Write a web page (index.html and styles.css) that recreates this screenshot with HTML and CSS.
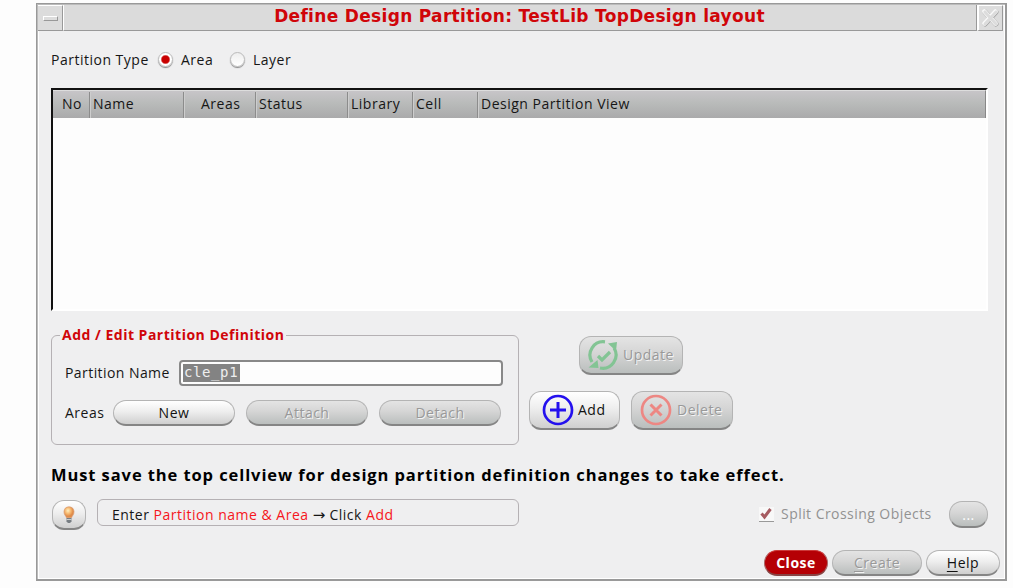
FILE: index.html
```html
<!DOCTYPE html>
<html lang="en">
<head>
<meta charset="utf-8">
<title>Define Design Partition</title>
<link rel="stylesheet" href="styles.css">
</head>
<body>
<main class="window">
  <header class="titlebar">
    <div class="sys"><i class="dash"></i></div>
    <h1 class="title">Define Design Partition: TestLib TopDesign layout</h1>
    <div class="sys close"><svg width="19" height="18" viewBox="0 0 19 18" fill="none" stroke-linejoin="round" stroke-linecap="round"><path d="M4 3l11 12M15 3L4 15" stroke="#a4a4a4" stroke-width="5"/><path d="M3.500 2.500l11 12M14.500 2.500l-11 12" stroke="#fafafa" stroke-width="4.600"/><path d="M4 3l11 12M15 3L4 15" stroke="#dcdcdc" stroke-width="3.200"/></svg></div>
  </header>
  <div class="content">
    <div class="types">
      <span class="t-type">Partition Type</span>
      <i class="radio on"></i><span class="t-area">Area</span>
      <i class="radio second"></i><span>Layer</span>
    </div>
    <section class="table">
      <div class="thead">
        <div class="th no">No</div><div class="th name">Name</div><div class="th areas">Areas</div><div class="th status">Status</div><div class="th library">Library</div><div class="th cell">Cell</div><div class="th view">Design Partition View</div>
      </div>
    </section>
    <div class="middle">
      <fieldset class="group">
        <legend>Add / Edit Partition Definition</legend>
        <div class="field"><span>Partition Name</span><div class="input"><span class="sel">cle_p1</span></div></div>
        <div class="arearow"><span class="lab">Areas</span><button class="btn">New</button><button class="btn off">Attach</button><button class="btn off">Detach</button></div>
      </fieldset>
      <div class="actions">
        <button class="big off update"><svg width="32" height="32" viewBox="0 0 32 32" fill="none" stroke="#83c494" stroke-width="3.200"><path d="M18 2.800A13.300 13.300 0 0 0 5 23M13 29A13.300 13.300 0 0 0 27 9"/><path d="M11 17l4 4 8-8"/><path d="M21 4.500l9-1.500-1 9zM1.500 28.500l9-7.500 1 8z" fill="#83c494" stroke="none"/></svg><span>Update</span></button>
        <div class="pair">
          <button class="big add"><svg width="32" height="32" viewBox="0 0 32 32" fill="none" stroke="#2410ee"><circle cx="16" cy="16" r="14" stroke-width="2.700"/><path d="M16 8v16M8 16h16" stroke-width="3"/></svg><span>Add</span></button>
          <button class="big off delete"><svg width="32" height="32" viewBox="0 0 32 32" fill="none" stroke="#ed8783"><circle cx="16" cy="16" r="14" stroke-width="2.700"/><path d="M10.500 10.500l11 11M21.500 10.500l-11 11" stroke-width="3"/></svg><span>Delete</span></button>
        </div>
      </div>
    </div>
    <p class="notice">Must save the top cellview for design partition definition changes to take effect.</p>
    <div class="tiprow">
      <button class="bulb"><svg width="14" height="18" viewBox="0 0 14 18"><defs><radialGradient id="glow" cx=".4" cy=".35"><stop offset="0" stop-color="#fff0c0"/><stop offset=".6" stop-color="#f5b56c"/><stop offset="1" stop-color="#df8c4a"/></radialGradient></defs><path d="M7 .8c3 0 5 2 5 5 0 3-2 4-2.500 6h-5C4 9.800 2 8.800 2 5.800c0-3 2-5 5-5z" fill="url(#glow)" stroke="#d89a70" stroke-width=".7"/><path d="M4.500 12h5v3.500l-1.500 1.500h-2l-1.500-1.500z" fill="#777d82"/><path d="M4.500 13.500h5" stroke="#ccc"/></svg></button>
      <div class="tip">Enter <b>Partition name &amp; Area</b> <span class="arrow">→</span> Click <b>Add</b></div>
      <i class="check"><svg width="15" height="14" viewBox="0 0 15 14"><path d="M2.500 6.500l3 3.500 6-8" fill="none" stroke="#a65b61" stroke-width="3"/></svg></i>
      <span class="split">Split Crossing Objects</span>
      <button class="btn off more">...</button>
    </div>
    <footer class="foot"><button class="btn primary">Close</button><button class="btn off create"><u>C</u>reate</button><button class="btn help"><u>H</u>elp</button></footer>
  </div>
</main>
</body>
</html>
```
FILE: styles.css
```css
* { box-sizing: border-box; }
body { margin: 0; padding: 3px 0 0 36px; width: 1013px; height: 588px; overflow: hidden; background: #fdfdfd; color: #161616; font: 14px/20px "Open Sans", "Noto Sans", sans-serif; letter-spacing: .5px; white-space: nowrap; }
.window { width: 971px; height: 578px; border: 1px solid #999; border-width: 1px 2px 2px 1px; background: #efeff0; box-shadow: inset 1px 1px #bbb, inset 2px 2px #fff, inset -1px -1px #fff; }
.titlebar { display: flex; height: 27px; padding: 1px 2px 0 1px; }
.sys { width: 25px; background: #dcdcdc; border-right: 1px solid #999; border-bottom: 1px solid #999; border-top: 1px solid #fff; display: grid; place-items: center; }
.dash { width: 15px; height: 5px; border: 1px solid #fff; border-right-color: #999; border-bottom-color: #999; background: #ddd; }
.title { flex: 1; margin: 0; padding-right: 1px; border: 1px solid #999; border-width: 0 1px 1px 0; border-left: 1px solid #fff; background: #dbdbdb; color: #d00509; font: bold 17px/22px "DejaVu Sans", sans-serif; letter-spacing: .32px; text-align: center; }
.close { width: 26px; border-left: 2px solid #fff; }
.content { padding: 19px 5px 0 14px; }
.types { display: flex; align-items: center; height: 20px; }
.t-type { width: 107px; }
.radio { width: 15px; height: 15px; border-radius: 50%; background: linear-gradient(#eee, #fff); border: 1px solid #bbb; box-shadow: 0 1px 1px #888; margin: -2px 8px 0 0; }
.radio.on { background: radial-gradient(circle, #c90000 0 3.5px, #fff 5px); }
.t-area { width: 49px; }
.table { width: 937px; height: 223px; margin-top: 18px; border: 2px solid #111; border-color: #111 #fff #fff #111; background: #fdfdfd; }
.thead { display: flex; height: 28px; border-top: 1px solid #ddd; background: linear-gradient(#c7c5c8, #b9bbba 45%, #aaaaab); border-right: 1px solid #888; }
.th { height: 26px; margin-top: 1px; line-height: 24px; padding-left: 3px; border-left: 1px solid #8c8c8c; box-shadow: inset 1px 0 #cdcdcd; }
.no { width: 36px; padding-left: 9px; border: 0; box-shadow: none; }
.name { width: 94px; } .areas { width: 72px; padding-left: 17px; } .status { width: 92px; } .library { width: 65px; } .cell { width: 65px; } .view { flex: 1; }
.middle { display: flex; }
.group { width: 468px; height: 120px; margin: 14px 0 0; padding: 15px 13px 0; min-width: 0; border: 1px solid #b5b1b4; border-radius: 6px; }
.group legend { padding: 0 2px; margin-left: -5px; height: 20px; color: #d00509; font-weight: bold; }
.field { display: flex; height: 26px; align-items: center; letter-spacing: .43px; }
.field > span { width: 114px; }
.input { width: 324px; height: 26px; padding: 2px 2px; border: 2px solid #888; border-radius: 4px; background: #fdfdfd; }
.sel { display: block; width: 57px; height: 18px; padding-left: 1px; background: #838383; color: #eee; font: 14px/16px "DejaVu Sans Mono", monospace; letter-spacing: .6px; }
.arearow { display: flex; margin-top: 14px; gap: 11px; align-items: center; }
.lab { width: 37px; }
.btn, .big, .bulb { font: inherit; letter-spacing: inherit; padding: 0; border: 1px solid #b4b4b4; border-bottom: 2px solid #858585; background: linear-gradient(#fff, #eee 45%, #cfcfcf); color: #111; }
.btn { width: 122px; height: 26px; border-radius: 13px; }
.btn.off, .big.off { color: #999; background: linear-gradient(#e4e4e4, #d5d5d5 45%, #babebd); text-shadow: 1px 1px #f4f4f4; }
.actions { padding: 25px 0 0 10px; }
.big { height: 39px; border-radius: 12px; display: flex; align-items: center; gap: 5px; }
.update { width: 104px; margin-left: 50px; padding-left: 7px; gap: 4px; }
.pair { display: flex; gap: 11px; margin-top: 16px; }
.add { width: 91px; padding-left: 12px; gap: 4px; }
.delete { width: 102px; padding-left: 8px; }
.notice { margin: 19px 0 0; height: 22px; font-size: 16.5px; line-height: 22px; font-weight: bold; letter-spacing: .91px; color: #000; font-variant-ligatures: none; }
.tiprow { display: flex; height: 31px; margin-top: 13px; }
.bulb { width: 34px; height: 30px; margin: 1px 11px 0 1px; border-radius: 12px; display: grid; place-items: center; }
.tip { width: 422px; height: 27px; padding-left: 14px; line-height: 29px; border: 1px solid #b5b1b4; border-radius: 6px; letter-spacing: .5px; }
.tip b { color: #f5161c; font-weight: 400; }
.arrow { font: 15px/1 "DejaVu Sans", sans-serif; letter-spacing: 0; }
.check { width: 15px; height: 15px; margin: 8px 0 0 240px; background: #f8f8f8; border-bottom: 1px solid #999; }
.check svg { display: block; }
.split { width: 168px; margin: 5px 0 0 7px; color: #929292; letter-spacing: .45px; }
.btn.more { width: 39px; height: 27px; margin-top: 2px; color: #fff; text-shadow: none; padding-top: 2px; }
.foot { display: flex; justify-content: flex-end; margin-top: 20px; gap: 4px; }
.btn.primary { width: 64px; color: #fff; background: #b50005; border-color: #cc3a3a #a66 #844; font-weight: bold; }
.create { width: 90px; } .help { width: 74px; }
.btn u { text-underline-offset: 3px; }
```
